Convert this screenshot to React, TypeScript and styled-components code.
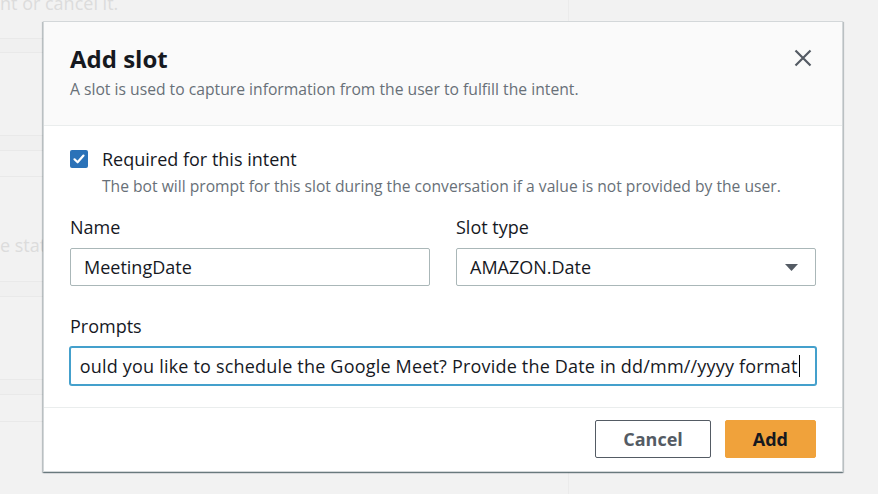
import React from "react";
import styled, { createGlobalStyle } from "styled-components";

const GlobalStyle = createGlobalStyle`
  html, body {
    margin: 0;
    padding: 0;
    background: #f2f2f2;
  }
  body {
    font-family: "Open Sans", "Noto Sans", "Liberation Sans", sans-serif;
    color: #16191f;
  }
  * {
    box-sizing: border-box;
  }
`;

const Page = styled.div`
  position: relative;
  width: 878px;
  height: 494px;
  overflow: hidden;
  background: #f2f2f2;
`;

/* Faded page behind the overlay */
const Backdrop = styled.div`
  display: flex;
  flex-direction: column;
  width: 569px;
  height: 100%;
  border-right: 1px solid #ebebeb;
`;

const BgBlock = styled.div<{ $h: number; $band?: boolean }>`
  flex: 0 0 ${(p) => p.$h}px;
  border-bottom: 1px solid #e9e9e9;
  background: ${(p) => (p.$band ? "#f0f0f0" : "#f2f2f2")};
  overflow: hidden;
`;

const BgText = styled.div<{ $top: number }>`
  margin-top: ${(p) => p.$top}px;
  font-size: 18px;
  line-height: 24px;
  color: #dcdcdc;
  white-space: nowrap;
`;

/* Modal */
const Modal = styled.div`
  position: absolute;
  top: 21px;
  left: 43px;
  width: 800px;
  background: #ffffff;
  border: 1px solid #d3d7d9;
  box-shadow: 0 1px 1px 0 rgba(0, 28, 36, 0.35),
    1px 1px 1px 0 rgba(0, 28, 36, 0.18), -1px 1px 1px 0 rgba(0, 28, 36, 0.18);
`;

const Header = styled.div`
  display: flex;
  justify-content: space-between;
  align-items: flex-start;
  padding: 22px 27px 25px 26px;
  background: #fafafa;
  border-bottom: 1px solid #eaeded;
`;

const HeaderText = styled.div`
  display: flex;
  flex-direction: column;
`;

const Title = styled.h2`
  margin: 0;
  font-size: 24px;
  line-height: 30px;
  font-weight: 700;
  color: #16191f;
`;

const Subtitle = styled.p`
  margin: 5px 0 0;
  font-size: 15.7px;
  line-height: 21px;
  color: #687078;
`;

const CloseButton = styled.button`
  display: flex;
  align-items: center;
  justify-content: center;
  width: 24px;
  height: 24px;
  margin-top: 2px;
  padding: 0;
  border: none;
  background: transparent;
  color: #545b64;
  cursor: pointer;
`;

const Body = styled.div`
  padding: 21px 26px 22px;
`;

const CheckRow = styled.label`
  display: flex;
  align-items: center;
  gap: 14px;
`;

const CheckBox = styled.span`
  display: flex;
  align-items: center;
  justify-content: center;
  width: 18px;
  height: 18px;
  border-radius: 2px;
  background: #2b72b8;
`;

const CheckLabel = styled.span`
  font-size: 18px;
  line-height: 24px;
  color: #16191f;
`;

const Description = styled.div`
  margin: 5px 0 0 32px;
  font-size: 15.65px;
  line-height: 21px;
  color: #687078;
`;

const FieldGrid = styled.div`
  display: grid;
  grid-template-columns: 1fr 1fr;
  column-gap: 26px;
  margin-top: 18px;
`;

const Field = styled.div<{ $gap?: number }>`
  display: flex;
  flex-direction: column;
  margin-top: ${(p) => p.$gap ?? 0}px;
`;

const FieldLabel = styled.div`
  margin-bottom: 9px;
  font-size: 18px;
  line-height: 24px;
  color: #16191f;
`;

const TextBox = styled.div<{ $focused?: boolean }>`
  display: flex;
  align-items: center;
  justify-content: ${(p) => (p.$focused ? "flex-end" : "flex-start")};
  height: 38px;
  padding: 0 ${(p) => (p.$focused ? 15 : 13)}px 0 13px;
  border: 1px solid ${(p) => (p.$focused ? "#44a0cc" : "#aab7b8")};
  border-radius: 2px;
  box-shadow: ${(p) => (p.$focused ? "0 0 0 1px #44a0cc" : "none")};
  background: #fff;
  overflow: hidden;
  font-size: 18px;
  line-height: 24px;
  color: #16191f;
  white-space: nowrap;
`;

const BoxText = styled.span<{ $spacing?: number }>`
  flex-shrink: 0;
  letter-spacing: ${(p) => p.$spacing ?? 0}px;
`;

const Caret = styled.span`
  flex-shrink: 0;
  width: 1.5px;
  height: 22px;
  margin-left: 1px;
  background: #000;
`;

const SelectBox = styled.div`
  display: flex;
  align-items: center;
  justify-content: space-between;
  height: 38px;
  padding: 0 17px 0 13px;
  border: 1px solid #aab7b8;
  border-radius: 2px;
  background: #fff;
  font-size: 18px;
  line-height: 24px;
  color: #16191f;
`;

const Footer = styled.div`
  display: flex;
  justify-content: flex-end;
  gap: 14px;
  padding: 12px 26px 13px;
  border-top: 1px solid #eaeded;
`;

const Button = styled.button<{ $primary?: boolean }>`
  height: 38px;
  padding: 0 27px;
  border-radius: 2px;
  border: 1px solid ${(p) => (p.$primary ? "#f0a23b" : "#545b64")};
  background: ${(p) => (p.$primary ? "#f0a23b" : "#ffffff")};
  color: ${(p) => (p.$primary ? "#16191f" : "#545b64")};
  font-family: inherit;
  font-size: 18px;
  font-weight: 700;
  line-height: 24px;
  cursor: pointer;
`;

export default function App() {
  return (
    <Page>
      <GlobalStyle />
      <Backdrop>
        <BgBlock $h={39}>
          <BgText $top={-9}>nt or cancel it.</BgText>
        </BgBlock>
        <BgBlock $h={14} $band />
        <BgBlock $h={83} />
        <BgBlock $h={15} $band />
        <BgBlock $h={26} />
        <BgBlock $h={105}>
          <BgText $top={56}>e status</BgText>
        </BgBlock>
        <BgBlock $h={15} $band />
        <BgBlock $h={83} />
        <BgBlock $h={15} $band />
        <BgBlock $h={27} />
      </Backdrop>

      <Modal role="dialog" aria-label="Add slot">
        <Header>
          <HeaderText>
            <Title>Add slot</Title>
            <Subtitle>
              A slot is used to capture information from the user to fulfill the
              intent.
            </Subtitle>
          </HeaderText>
          <CloseButton aria-label="Close">
            <svg width="18" height="18" viewBox="0 0 18 18">
              <path
                d="M1.5 1.5 L16.5 16.5 M16.5 1.5 L1.5 16.5"
                stroke="currentColor"
                strokeWidth="2.2"
                fill="none"
              />
            </svg>
          </CloseButton>
        </Header>

        <Body>
          <CheckRow>
            <CheckBox>
              <svg width="14" height="14" viewBox="0 0 14 14">
                <path
                  d="M2.5 7.3 L5.6 10.3 L11.5 3.6"
                  stroke="#fff"
                  strokeWidth="2.2"
                  fill="none"
                  strokeLinecap="round"
                  strokeLinejoin="round"
                />
              </svg>
            </CheckBox>
            <CheckLabel>Required for this intent</CheckLabel>
          </CheckRow>
          <Description>
            The bot will prompt for this slot during the conversation if a value
            is not provided by the user.
          </Description>

          <FieldGrid>
            <Field>
              <FieldLabel>Name</FieldLabel>
              <TextBox>
                <BoxText>MeetingDate</BoxText>
              </TextBox>
            </Field>
            <Field>
              <FieldLabel>Slot type</FieldLabel>
              <SelectBox>
                <span>AMAZON.Date</span>
                <svg width="13" height="7" viewBox="0 0 13 7">
                  <polygon points="0,0 13,0 6.5,7" fill="#545b64" />
                </svg>
              </SelectBox>
            </Field>
          </FieldGrid>

          <Field $gap={28}>
            <FieldLabel>Prompts</FieldLabel>
            <TextBox $focused>
              <BoxText $spacing={0.19}>
                ould you like to schedule the Google Meet? Provide the Date in
                dd/mm//yyyy format
              </BoxText>
              <Caret />
            </TextBox>
          </Field>
        </Body>

        <Footer>
          <Button>Cancel</Button>
          <Button $primary>Add</Button>
        </Footer>
      </Modal>
    </Page>
  );
}
